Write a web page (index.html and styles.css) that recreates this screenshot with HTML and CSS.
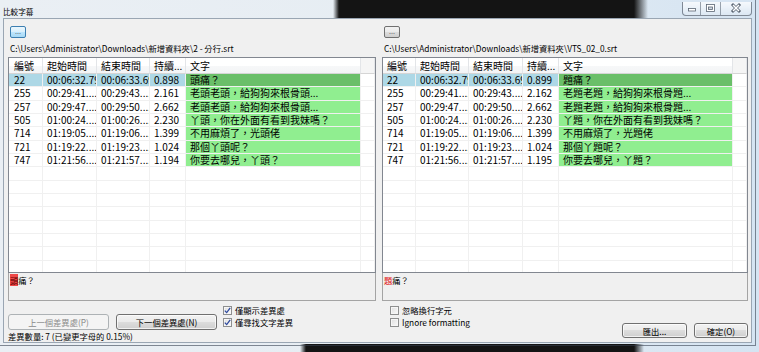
FILE: index.html
```html
<!DOCTYPE html>
<html lang="zh-Hant">
<head>
    <meta charset="UTF-8">
    <title>比較字幕</title>
    <link rel="stylesheet" href="styles.css">
</head>
<body>
    <div class="window">
        <div class="titlebar">
            <span class="title">比較字幕</span>
            <div class="caption-buttons">
                <span class="cap cap-min">
                    <svg width="17" height="13" viewBox="0 0 17 13"><rect x="5.5" y="6.5" width="7" height="2.5" fill="#fff" stroke="#5a6573" stroke-width="0.8"/></svg>
                </span>
                <span class="cap cap-max">
                    <svg width="19" height="13" viewBox="0 0 19 13"><rect x="5.5" y="2.5" width="8" height="7" fill="#fff" stroke="#5a6573" stroke-width="0.8"/><rect x="7.5" y="5" width="4" height="2.5" fill="#cfd8e1" stroke="#5a6573" stroke-width="0.8"/></svg>
                </span>
                <span class="cap cap-close">
                    <svg width="30" height="13" viewBox="0 0 30 13"><path d="M12 3 L18 9 M18 3 L12 9" stroke="#5a6573" stroke-width="3" stroke-linecap="square"/><path d="M12 3 L18 9 M18 3 L12 9" stroke="#fff" stroke-width="1.5"/></svg>
                </span>
            </div>
        </div>

        <div class="client">
            <div class="panels">
                <!-- left subtitle -->
                <div class="panel">
                    <button class="browse focused">...</button>
                    <div class="path">C:\Users\Administrator\Downloads\新增資料夾\2 - 分行.srt</div>
                    <div class="listview cols-left">
                        <div class="row head">
                            <span>編號</span><span>起始時間</span><span>結束時間</span><span>持續...</span><span>文字</span><span></span>
                        </div>
                        <div class="row selected">
                            <span>22</span><span>00:06:32.799</span><span>00:06:33.697</span><span>0.898</span><span class="diff">頭痛？</span><span></span>
                        </div>
                        <div class="row">
                            <span>255</span><span>00:29:41....</span><span>00:29:43....</span><span>2.161</span><span class="diff">老頭老頭，給狗狗來根骨頭...</span><span></span>
                        </div>
                        <div class="row">
                            <span>257</span><span>00:29:47....</span><span>00:29:50....</span><span>2.662</span><span class="diff">老頭老頭，給狗狗來根骨頭...</span><span></span>
                        </div>
                        <div class="row">
                            <span>505</span><span>01:00:24....</span><span>01:00:26....</span><span>2.230</span><span class="diff">丫頭，你在外面有看到我妹嗎？</span><span></span>
                        </div>
                        <div class="row">
                            <span>714</span><span>01:19:05....</span><span>01:19:06....</span><span>1.399</span><span class="diff">不用麻煩了，光頭佬</span><span></span>
                        </div>
                        <div class="row">
                            <span>721</span><span>01:19:22....</span><span>01:19:23....</span><span>1.024</span><span class="diff">那個丫頭呢？</span><span></span>
                        </div>
                        <div class="row">
                            <span>747</span><span>01:21:56....</span><span>01:21:57....</span><span>1.194</span><span class="diff">你要去哪兒，丫頭？</span><span></span>
                        </div>
                        <div class="row"><span></span><span></span><span></span><span></span><span></span><span></span></div>
                        <div class="row"><span></span><span></span><span></span><span></span><span></span><span></span></div>
                        <div class="row"><span></span><span></span><span></span><span></span><span></span><span></span></div>
                        <div class="row"><span></span><span></span><span></span><span></span><span></span><span></span></div>
                        <div class="row"><span></span><span></span><span></span><span></span><span></span><span></span></div>
                        <div class="row"><span></span><span></span><span></span><span></span><span></span><span></span></div>
                        <div class="row"><span></span><span></span><span></span><span></span><span></span><span></span></div>
                        <div class="row"><span></span><span></span><span></span><span></span><span></span><span></span></div>
                    </div>
                    <div class="diff-text"><span class="mark-bg">頭</span>痛？</div>
                    <div class="footer footer-left">
                        <div class="nav">
                            <div class="nav-buttons">
                                <button class="btn btn-nav" disabled>上一個差異處(P)</button>
                                <button class="btn btn-nav">下一個差異處(N)</button>
                            </div>
                            <div class="status">差異數量: 7 (已變更字母的 0.15%)</div>
                        </div>
                        <div class="checks">
                            <label class="check"><span class="box"><svg width="7" height="7" viewBox="0 0 7 7"><path d="M0.8 3.6 L2.7 5.6 L6.2 0.9" fill="none" stroke="#2e4a9e" stroke-width="1.3"/></svg></span>僅顯示差異處</label>
                            <label class="check"><span class="box"><svg width="7" height="7" viewBox="0 0 7 7"><path d="M0.8 3.6 L2.7 5.6 L6.2 0.9" fill="none" stroke="#2e4a9e" stroke-width="1.3"/></svg></span>僅尋找文字差異</label>
                        </div>
                    </div>
                </div>

                <!-- right subtitle -->
                <div class="panel">
                    <button class="browse">...</button>
                    <div class="path">C:\Users\Administrator\Downloads\新增資料夾\VTS_02_0.srt</div>
                    <div class="listview cols-right">
                        <div class="row head">
                            <span>編號</span><span>起始時間</span><span>結束時間</span><span>持續...</span><span>文字</span><span></span>
                        </div>
                        <div class="row selected">
                            <span>22</span><span>00:06:32.799</span><span>00:06:33.698</span><span>0.899</span><span class="diff">題痛？</span><span></span>
                        </div>
                        <div class="row">
                            <span>255</span><span>00:29:41....</span><span>00:29:43....</span><span>2.162</span><span class="diff">老題老題，給狗狗來根骨題...</span><span></span>
                        </div>
                        <div class="row">
                            <span>257</span><span>00:29:47....</span><span>00:29:50....</span><span>2.662</span><span class="diff">老題老題，給狗狗來根骨題...</span><span></span>
                        </div>
                        <div class="row">
                            <span>505</span><span>01:00:24....</span><span>01:00:26....</span><span>2.230</span><span class="diff">丫題，你在外面有看到我妹嗎？</span><span></span>
                        </div>
                        <div class="row">
                            <span>714</span><span>01:19:05....</span><span>01:19:06....</span><span>1.399</span><span class="diff">不用麻煩了，光題佬</span><span></span>
                        </div>
                        <div class="row">
                            <span>721</span><span>01:19:22....</span><span>01:19:23....</span><span>1.024</span><span class="diff">那個丫題呢？</span><span></span>
                        </div>
                        <div class="row">
                            <span>747</span><span>01:21:56....</span><span>01:21:57....</span><span>1.195</span><span class="diff">你要去哪兒，丫題？</span><span></span>
                        </div>
                        <div class="row"><span></span><span></span><span></span><span></span><span></span><span></span></div>
                        <div class="row"><span></span><span></span><span></span><span></span><span></span><span></span></div>
                        <div class="row"><span></span><span></span><span></span><span></span><span></span><span></span></div>
                        <div class="row"><span></span><span></span><span></span><span></span><span></span><span></span></div>
                        <div class="row"><span></span><span></span><span></span><span></span><span></span><span></span></div>
                        <div class="row"><span></span><span></span><span></span><span></span><span></span><span></span></div>
                        <div class="row"><span></span><span></span><span></span><span></span><span></span><span></span></div>
                        <div class="row"><span></span><span></span><span></span><span></span><span></span><span></span></div>
                    </div>
                    <div class="diff-text"><span class="mark-fg">題</span>痛？</div>
                    <div class="footer footer-right">
                        <div class="checks">
                            <label class="check"><span class="box"></span>忽略換行字元</label>
                            <label class="check"><span class="box"></span>Ignore formatting</label>
                        </div>
                        <div class="actions">
                            <button class="btn btn-export">匯出...</button>
                            <button class="btn btn-ok">確定(O)</button>
                        </div>
                    </div>
                </div>
            </div>
        </div>
    </div>
</body>
</html>
```

FILE: styles.css
```css
* {
    box-sizing: border-box;
}

body {
    margin: 0;
    width: 759px;
    height: 352px;
    overflow: hidden;
    font-family: "Noto Sans CJK TC", "Noto Sans CJK SC", sans-serif;
    color: #000;
    background:
        linear-gradient(90deg, rgba(20,20,20,0) 333px, #141414 339px, #141414 634px, rgba(20,20,20,0) 648px) top left / 100% 21px no-repeat,
        linear-gradient(90deg, rgba(20,20,20,0) 300px, #141414 306px, #141414 634px, rgba(20,20,20,0) 644px) bottom left / 100% 8px no-repeat,
        linear-gradient(90deg, #eaeff4 0, #e6edf3 55%, #d5e4f2 100%);
}

/* window frame */
.window {
    width: 756px;
    height: 346px;
    display: flex;
    flex-direction: column;
    border-right: 1px solid rgba(55, 65, 80, 0.6);
    border-bottom: 1px solid rgba(55, 65, 80, 0.6);
}

.titlebar {
    height: 20px;
    display: flex;
    justify-content: space-between;
    align-items: flex-start;
    padding: 0 3px;
}

.title {
    font-size: 7.6px;
    line-height: 10px;
    margin-top: 7px;
}

.caption-buttons {
    display: flex;
    margin-top: 2px;
    height: 14px;
    border: 1px solid rgba(80, 92, 108, 0.7);
    border-top: none;
    border-radius: 0 0 4px 4px;
    background: linear-gradient(rgba(255,255,255,0.75), rgba(225,235,245,0.55));
    overflow: hidden;
}

.cap {
    display: flex;
    height: 13px;
}

.cap + .cap {
    border-left: 1px solid rgba(80, 92, 108, 0.55);
}

.client {
    flex: 1;
    margin: 0 3px 2px 3px;
    border: 1px solid #9aa6b3;
    background: #f0f0f0;
    padding: 0 3px 0 4px;
}

.panels {
    display: grid;
    grid-template-columns: 368px 366px;
    column-gap: 6px;
    height: 100%;
}

.panel {
    display: flex;
    flex-direction: column;
    min-width: 0;
}

/* browse button */
.browse {
    width: 16px;
    height: 12px;
    margin: 7px 0 0 2px;
    padding: 0;
    border: 1px solid #707070;
    border-radius: 2px;
    background: linear-gradient(#f2f2f2 0%, #ebebeb 49%, #dddddd 50%, #cfcfcf 100%);
    font-family: "Liberation Sans", sans-serif;
    font-size: 7px;
    line-height: 8px;
    color: #333;
}

.browse.focused {
    border-color: #3c7fb1;
    background: linear-gradient(#eaf6fd 0%, #d9f0fc 49%, #bee6fd 50%, #a7d9f5 100%);
}

.path {
    margin-top: 4px;
    padding-left: 2px;
    font-size: 8.3px;
    line-height: 12px;
    white-space: nowrap;
}

/* list view */
.listview {
    margin-top: 3px;
    height: 216px;
    border: 1px solid #828790;
    background: #fff;
    overflow: hidden;
    font-size: 10px;
}

.row {
    display: grid;
    height: 13.33px;
    line-height: 12.33px;
}

.cols-left .row {
    grid-template-columns: 34px 54px 53px 36px 175px 1fr;
}

.cols-right .row {
    grid-template-columns: 33px 53px 54px 36px 174px 1fr;
}

.row span {
    padding-left: 4px;
    border-right: 1px solid #f0f0f0;
    border-bottom: 1px solid #f0f0f0;
    white-space: nowrap;
    overflow: hidden;
}

.cols-left .row span:first-child {
    padding-left: 5px;
}

.row.head {
    height: 16px;
    line-height: 15px;
    background: linear-gradient(#ffffff 0%, #ffffff 50%, #f7f8f9 51%, #f2f3f5 100%);
}

.row.head span {
    border-right-color: #e3e5e8;
    border-bottom-color: #d5d5d5;
}

.row.head span:last-child {
    background: #f5f5f5;
}

.row .diff {
    background: #90ee90;
}

.row.selected span:nth-child(-n+4) {
    background: #add8e6;
}

.row.selected .diff {
    background: #6abf69;
}

/* text of the selected line */
.diff-text {
    height: 28px;
    border: 1px solid #a4a4a4;
    border-top: none;
    padding: 2px 0 0 1px;
    font-size: 8.3px;
    line-height: 10px;
}

.mark-bg {
    background: #f04848;
    color: #5a0000;
}

.mark-fg {
    color: #e01010;
}

/* footer */
.footer {
    flex: 1;
    display: flex;
    font-size: 8.3px;
}

.nav {
    padding-top: 13px;
}

.nav-buttons {
    display: flex;
    gap: 7px;
}

.btn {
    height: 16px;
    padding: 0;
    border: 1px solid #707070;
    border-radius: 3px;
    background: linear-gradient(#f2f2f2 0%, #ebebeb 49%, #dddddd 50%, #cfcfcf 100%);
    box-shadow: inset 0 0 0 1px rgba(255, 255, 255, 0.7);
    font-family: "Noto Sans CJK TC", sans-serif;
    font-size: 8.3px;
    line-height: 12px;
    color: #000;
}

.btn:disabled {
    border-color: #adb2b5;
    background: #f4f4f4;
    box-shadow: none;
    color: #8a8a8a;
}

.btn-nav {
    width: 101px;
}

.status {
    line-height: 12px;
    white-space: nowrap;
}

.checks {
    padding-top: 3px;
}

.footer-left .checks {
    margin-left: 6px;
}

.footer-right {
    justify-content: space-between;
}

.footer-right .checks {
    margin-left: 8px;
}

.check {
    display: flex;
    align-items: center;
    gap: 3px;
    height: 12px;
    line-height: 12px;
    white-space: nowrap;
}

.box {
    display: flex;
    align-items: center;
    justify-content: center;
    width: 9px;
    height: 9px;
    border: 1px solid #8e8f8f;
    background: linear-gradient(135deg, #dedede, #fbfbfb);
    box-shadow: inset 0 0 0 1px #f6f6f6;
}

.actions {
    display: flex;
    gap: 7px;
    padding-top: 22px;
}

.actions .btn {
    height: 15px;
}

.btn-export {
    width: 65px;
}

.btn-ok {
    width: 54px;
}
```
